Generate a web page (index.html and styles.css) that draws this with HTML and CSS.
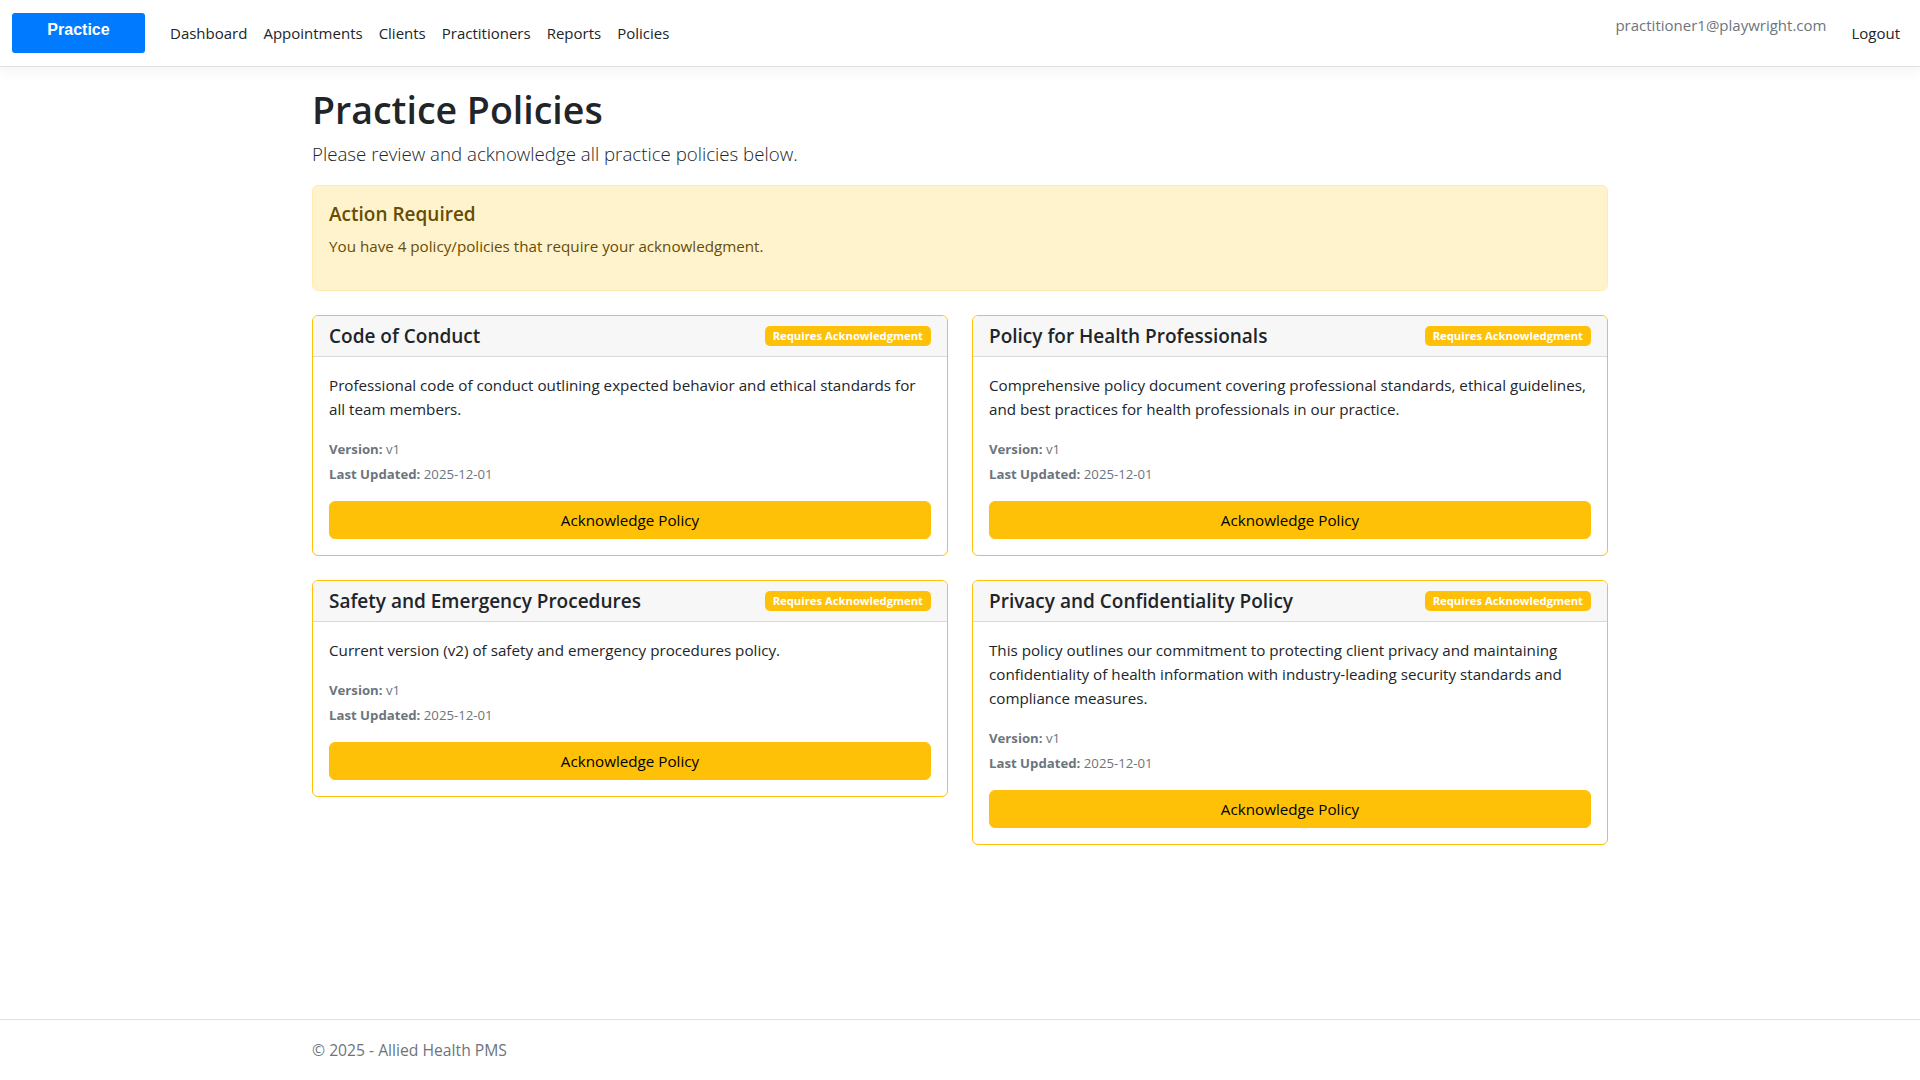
FILE: index.html
```html
<!DOCTYPE html>
<html lang="en">
<head>
  <meta charset="UTF-8">
  <meta name="viewport" content="width=device-width, initial-scale=1.0">
  <title>Policies - Allied Health PMS</title>
  <link rel="stylesheet" href="styles.css">
</head>
<body>

<header>
  <nav class="navbar">
    <a class="brand" href="#">Practice</a>
    <ul class="nav-links">
      <li><a href="#">Dashboard</a></li>
      <li><a href="#">Appointments</a></li>
      <li><a href="#">Clients</a></li>
      <li><a href="#">Practitioners</a></li>
      <li><a href="#">Reports</a></li>
      <li><a href="#">Policies</a></li>
    </ul>
    <span class="navbar-text">practitioner1@playwright.com</span>
    <a class="logout" href="#">Logout</a>
  </nav>
</header>

<main class="container">
  <h1>Practice Policies</h1>
  <p class="lead">Please review and acknowledge all practice policies below.</p>

  <!-- Pending acknowledgments -->
  <div class="alert">
    <h5>Action Required</h5>
    <p>You have 4 policy/policies that require your acknowledgment.</p>
  </div>

  <div class="policy-grid">
    <div class="card">
      <div class="card-header">
        <h5>Code of Conduct</h5>
        <span class="badge">Requires Acknowledgment</span>
      </div>
      <div class="card-body">
        <p class="desc">Professional code of conduct outlining expected behavior and ethical standards for all team members.</p>
        <p class="meta"><strong>Version:</strong> v1</p>
        <p class="meta last"><strong>Last Updated:</strong> 2025-12-01</p>
        <button type="button" class="btn-ack">Acknowledge Policy</button>
      </div>
    </div>

    <div class="card">
      <div class="card-header">
        <h5>Policy for Health Professionals</h5>
        <span class="badge">Requires Acknowledgment</span>
      </div>
      <div class="card-body">
        <p class="desc">Comprehensive policy document covering professional standards, ethical guidelines, and best practices for health professionals in our practice.</p>
        <p class="meta"><strong>Version:</strong> v1</p>
        <p class="meta last"><strong>Last Updated:</strong> 2025-12-01</p>
        <button type="button" class="btn-ack">Acknowledge Policy</button>
      </div>
    </div>

    <div class="card">
      <div class="card-header">
        <h5>Safety and Emergency Procedures</h5>
        <span class="badge">Requires Acknowledgment</span>
      </div>
      <div class="card-body">
        <p class="desc">Current version (v2) of safety and emergency procedures policy.</p>
        <p class="meta"><strong>Version:</strong> v1</p>
        <p class="meta last"><strong>Last Updated:</strong> 2025-12-01</p>
        <button type="button" class="btn-ack">Acknowledge Policy</button>
      </div>
    </div>

    <div class="card">
      <div class="card-header">
        <h5>Privacy and Confidentiality Policy</h5>
        <span class="badge">Requires Acknowledgment</span>
      </div>
      <div class="card-body">
        <p class="desc">This policy outlines our commitment to protecting client privacy and maintaining confidentiality of health information with industry-leading security standards and compliance measures.</p>
        <p class="meta"><strong>Version:</strong> v1</p>
        <p class="meta last"><strong>Last Updated:</strong> 2025-12-01</p>
        <button type="button" class="btn-ack">Acknowledge Policy</button>
      </div>
    </div>
  </div>
</main>

<footer>
  <div class="container">&copy; 2025 - Allied Health PMS</div>
</footer>

</body>
</html>
```

FILE: styles.css
```css
body {
  font-family: "Segoe UI", "Open Sans", sans-serif;
  font-size: 15.2px; line-height: 24px;
  margin: 0;
  color: #212529;
  background: #fff;
  min-height: 100vh;
  display: flex; flex-direction: column;
}
a { text-decoration: none; }
h1, h5, p { margin-top: 0; }

/* Top bar */
.navbar {
  display: flex; align-items: center;
  padding: 13px 12px;
  font-size: 15px;
  border-bottom: 1px solid #dee2e6;
  box-shadow: 0 4px 12px rgba(0,0,0,0.05);
  margin-bottom: 16px;
}
.brand {
  display: block; width: 133px; box-sizing: border-box;
  padding: 8px 0 14px; line-height: 18px;
  background: #007bff; color: #fff; border-radius: 3px;
  font-family: "Liberation Sans", Arial, sans-serif;
  font-weight: bold; font-size: 16px; text-align: center;
  margin-right: 17px;
}
.nav-links { display: flex; list-style: none; margin: 0; padding: 0; flex: 1; }
.nav-links a, .logout { display: block; padding: 0 8px; color: #212529; line-height: 40px; }
.navbar-text { align-self: flex-start; color: #6c757d; line-height: 24px; margin-right: 17px; }

.container { width: 1296px; margin: 0 auto; }

h1 { font-size: 37.5px; font-weight: 600; line-height: 48px; margin: 3px 0 5px; }
.lead { font-size: 18.7px; font-weight: 300; line-height: 30px; margin-bottom: 16px; }

.alert {
  background: #fff3cd; border: 1px solid #ffecb5; color: #664d03;
  border-radius: 6px; padding: 16px; margin-bottom: 24px;
}
.alert h5 { font-size: 19px; font-weight: 600; line-height: 24px; margin-bottom: 8px; }
.alert p { margin-bottom: 16px; }

/* Policy cards */
.policy-grid {
  display: grid; grid-template-columns: 1fr 1fr;
  gap: 24px; align-items: start;
}
.card { border: 1px solid #ffc107; border-radius: 6px; overflow: hidden; }
.card-header {
  display: flex; justify-content: space-between; align-items: center;
  padding: 8px 16px;
  background: #f7f7f7;
  border-bottom: 1px solid #d9d9d9;
}
.card-header h5 { font-size: 19px; font-weight: 600; line-height: 24px; margin: 0; }
.badge {
  background: #ffc107; color: #fff;
  font-size: 11.25px; font-weight: 700; line-height: 12px;
  padding: 4px 8px; border-radius: 5px;
}
.card-body { padding: 16px; }
.card-body .desc { margin-bottom: 18px; }
.card-body .meta { font-size: 13.2px; line-height: 21px; color: #6c757d; margin-bottom: 4px; }
.card-body .meta.last { margin-bottom: 16px; }
.btn-ack {
  display: block; width: 100%;
  background: #ffc107; color: #000;
  border: 1px solid #ffc107; border-radius: 6px;
  padding: 6px 12px;
  font: inherit; cursor: pointer;
}
.btn-ack:hover { background: #ffca2c; }

footer {
  margin-top: auto;
  border-top: 1px solid #dee2e6;
  font-size: 15.7px;
  line-height: 60px; color: #6c757d;
  white-space: nowrap;
}
```
